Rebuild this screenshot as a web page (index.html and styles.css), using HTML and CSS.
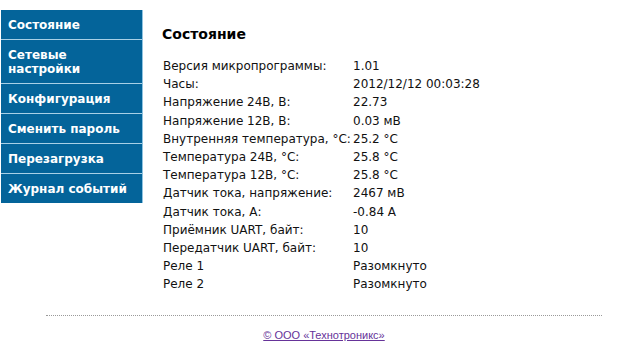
FILE: index.html
```html
<!DOCTYPE html>
<html lang="ru">
<head>
<meta charset="utf-8">
<link rel="stylesheet" href="styles.css">
</head>
<body>
<div class="page">
  <nav class="menu">
    <a class="item" href="#">Состояние</a>
    <a class="item" href="#">Сетевые<br>настройки</a>
    <a class="item" href="#">Конфигурация</a>
    <a class="item" href="#">Сменить пароль</a>
    <a class="item" href="#">Перезагрузка</a>
    <a class="item" href="#">Журнал событий</a>
  </nav>
  <main class="content">
    <h1 class="title">Состояние</h1>
    <table class="status">
      <tr><td>Версия микропрограммы:</td><td>1.01</td></tr>
      <tr><td>Часы:</td><td>2012/12/12 00:03:28</td></tr>
      <tr><td>Напряжение 24В, В:</td><td>22.73</td></tr>
      <tr><td>Напряжение 12В, В:</td><td>0.03 мВ</td></tr>
      <tr><td>Внутренняя температура, °C:</td><td>25.2 °C</td></tr>
      <tr><td>Температура 24В, °C:</td><td>25.8 °C</td></tr>
      <tr><td>Температура 12В, °C:</td><td>25.8 °C</td></tr>
      <tr><td>Датчик тока, напряжение:</td><td>2467 мВ</td></tr>
      <tr><td>Датчик тока, А:</td><td>-0.84 А</td></tr>
      <tr><td>Приёмник UART, байт:</td><td>10</td></tr>
      <tr><td>Передатчик UART, байт:</td><td>10</td></tr>
      <tr><td>Реле 1</td><td>Разомкнуто</td></tr>
      <tr><td>Реле 2</td><td>Разомкнуто</td></tr>
    </table>
  </main>
</div>
<footer class="footer">
  <a class="copy" href="#">© ООО «Технотроникс»</a>
</footer>
</body>
</html>
```
FILE: styles.css
```css
html, body {
  margin: 0;
  padding: 0;
  background: #ffffff;
}
body {
  font-family: "DejaVu Sans", Verdana, sans-serif;
  color: #111111;
}
.page {
  display: flex;
  align-items: flex-start;
  padding: 10px 0 0 1px;
}
.menu {
  width: 141px;
  display: flex;
  flex-direction: column;
  border-right: 1px solid #8fc3e0;
  background: #04649a;
}
.item {
  display: block;
  color: #ffffff;
  text-decoration: none;
  font-weight: bold;
  font-size: 12px;
  line-height: 14px;
  padding: 8px 7px 7px 7px;
  border-bottom: 1px solid #a9d0e6;
  background: #04649a;
  white-space: nowrap;
}
.item:last-child {
  border-bottom: none;
}
.content {
  padding-left: 19px;
}
.title {
  font-size: 14px;
  font-weight: bold;
  margin: 16px 0 14px 0;
  line-height: 17px;
  color: #000000;
}
.status {
  border-collapse: collapse;
  font-size: 12px;
  margin-left: 1px;
}
.status td {
  padding: 0;
  height: 18.2px;
  line-height: 14px;
  white-space: nowrap;
  vertical-align: middle;
}
.status td:first-child {
  width: 190px;
}
.footer {
  margin: 22px 22px 0 46px;
  border-top: 1px dotted #9a9a9a;
  text-align: center;
  padding-top: 8px;
}
.copy {
  font-family: "Liberation Sans", Arial, sans-serif;
  font-size: 11px;
  color: #663399;
}
```
